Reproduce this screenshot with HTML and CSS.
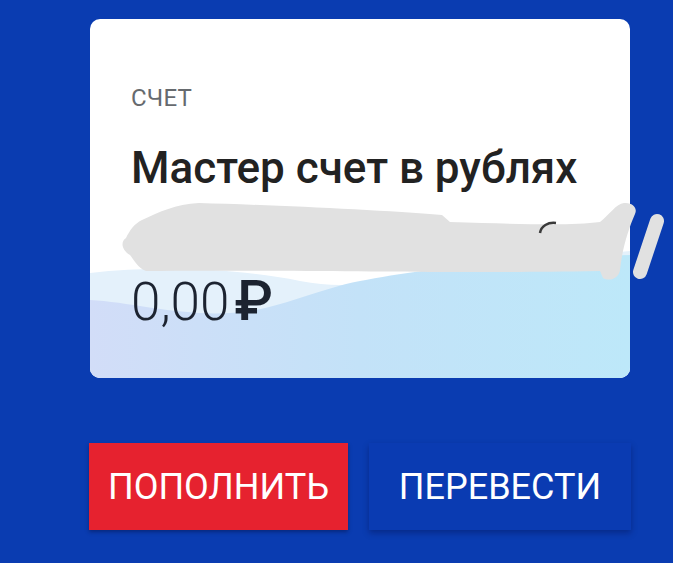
FILE: index.html
```html
<!DOCTYPE html>
<html lang="ru">
<head>
<meta charset="utf-8">
<link rel="stylesheet" href="styles.css">
</head>
<body>
<div class="page">
  <div class="card">
    <svg class="waves" viewBox="0 0 540 359" preserveAspectRatio="none">
      <defs>
        <linearGradient id="g1" x1="0" y1="0" x2="1" y2="0">
          <stop offset="0" stop-color="#d2ddf8"/>
          <stop offset="0.5" stop-color="#c3e2f8"/>
          <stop offset="1" stop-color="#bde8f9"/>
        </linearGradient>
      </defs>
      <path d="M0,254 C70,246 150,250 210,262 C260,272 300,262 350,250 L540,232 V359 H0 Z" fill="#e4f1fb"/>
      <path d="M0,281 C40,283 90,297 140,294 C190,291 220,272 270,262 C330,250 420,240 540,236 V359 H0 Z" fill="url(#g1)"/>
    </svg>
    <div class="content">
      <div class="label">СЧЕТ</div>
      <div class="title">Мастер счет в рублях</div>
      <div class="amount">0,00<span class="cur">₽</span></div>
    </div>
    <svg class="smear" viewBox="0 0 600 120">
      <path d="M79,3 C150,5 260,10 322,15 L330,22 C400,24 450,26 480,22 C490,14 496,4 504,3 C512,2 518,8 515,14 C508,30 502,50 500,70 C499,78 490,82 483,78 L480,71 C420,72 380,72 329,72 C250,72 120,70 26,71 C18,68 14,60 10,55 C2,50 0,42 6,38 C10,30 14,24 22,20 C40,12 55,4 79,3 Z" fill="#e1e1e1"/>
      <path d="M537,21 L520,72" stroke="#e1e1e1" stroke-width="14" stroke-linecap="round"/>
      <path d="M420,33 C421,26 428,22 436,23" stroke="#3a3a3a" stroke-width="2.5" fill="none"/>
    </svg>
  </div>
  <div class="actions">
    <button class="btn btn-red">ПОПОЛНИТЬ</button>
    <button class="btn btn-blue">ПЕРЕВЕСТИ</button>
  </div>
</div>
</body>
</html>
```

FILE: styles.css
```css
html, body {
  margin: 0;
  padding: 0;
  background: #0a3cb1;
  font-family: Roboto, "Noto Sans", sans-serif;
}
.page {
  width: 673px;
  height: 563px;
  padding: 19px 0 0 90px;
  box-sizing: border-box;
  overflow: hidden;
}
.card {
  position: relative;
  width: 540px;
  height: 359px;
  background: #ffffff;
  border-radius: 10px;
}
.waves {
  position: absolute;
  left: 0;
  top: 0;
  width: 540px;
  height: 359px;
  border-radius: 10px;
  overflow: hidden;
  display: block;
}
.content {
  position: relative;
  padding: 64px 0 0 41px;
}
.label {
  font-size: 24px;
  line-height: 30px;
  color: #666a6e;
  letter-spacing: 0.2px;
}
.title {
  margin-top: 29px;
  font-size: 44px;
  line-height: 52px;
  font-weight: 500;
  color: #222222;
}
.amount {
  margin-top: 77px;
  font-size: 53px;
  line-height: 60px;
  font-weight: 300;
  color: #1c2330;
}
.cur {
  font-weight: 500;
  font-size: 56px;
  margin-left: 5px;
}
.smear {
  position: absolute;
  left: 30px;
  top: 181px;
  width: 600px;
  height: 120px;
  overflow: visible;
}
.actions {
  display: flex;
  gap: 21px;
  margin-top: 65px;
  margin-left: -1px;
}
.btn {
  height: 87px;
  border: none;
  font-family: Roboto, "Noto Sans", sans-serif;
  font-size: 36px;
  color: #ffffff;
  padding: 0;
}
.btn-red {
  width: 259px;
  background: #e6222f;
  box-shadow: 0 2px 4px rgba(0, 0, 30, 0.35);
}
.btn-blue {
  width: 262px;
  background: #0a3bb2;
  box-shadow: 0 3px 6px rgba(0, 10, 60, 0.35);
}
```
